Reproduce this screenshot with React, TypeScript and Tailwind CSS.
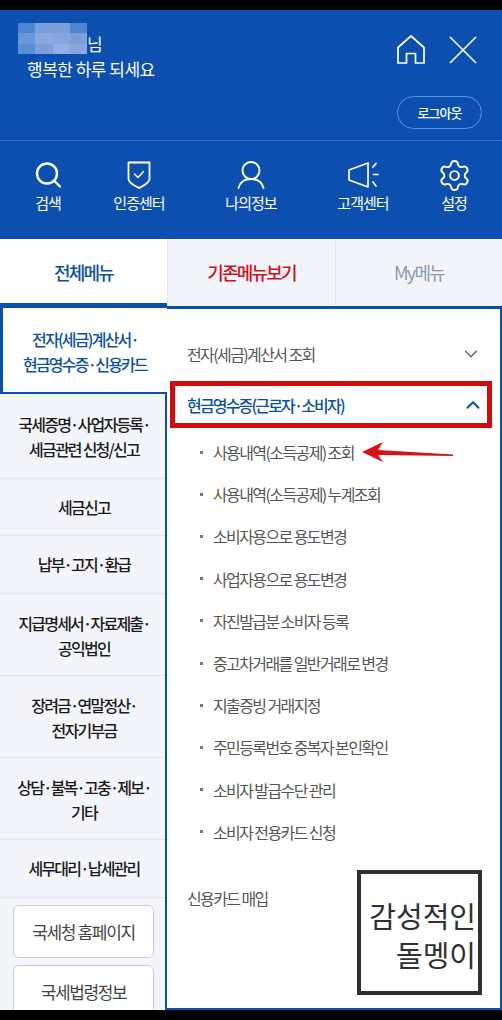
import { ChevronDown, ChevronUp, Settings } from "lucide-react";

const font = "font-['Noto_Sans_CJK_KR','Noto_Sans',sans-serif]";

function HomeIcon() {
  return (
    <svg width="28" height="29" viewBox="0 0 28 29" fill="none" stroke="currentColor" strokeWidth="1.7" strokeLinejoin="round">
      <path d="M1 12.5 L14 1 L27 12.5 V28 H18.5 V18.5 H9.5 V28 H1 Z" />
    </svg>
  );
}

function CloseIcon() {
  return (
    <svg width="28" height="28" viewBox="0 0 28 28" fill="none" stroke="currentColor" strokeWidth="1.6">
      <path d="M1 1 L27 27 M27 1 L1 27" />
    </svg>
  );
}

function SearchIcon() {
  return (
    <svg width="26" height="26" viewBox="0 0 26 26" fill="none" stroke="currentColor" strokeWidth="2.4" strokeLinecap="round">
      <circle cx="12" cy="11.5" r="10" />
      <path d="M19.5 19 L25 24.5" />
    </svg>
  );
}

function ShieldIcon() {
  return (
    <svg width="24" height="28" viewBox="0 0 24 28" fill="none" stroke="currentColor" strokeWidth="1.8" strokeLinejoin="round" strokeLinecap="round">
      <path d="M1.5 1.5 H22.5 V18 C22.5 22 16 25 12 27 C8 25 1.5 22 1.5 18 Z" />
      <path d="M7.5 13 L11 16.5 L16.5 10.5" strokeWidth="1.5" />
    </svg>
  );
}

function UserIcon() {
  return (
    <svg width="28" height="28" viewBox="0 0 28 28" fill="none" stroke="currentColor" strokeWidth="1.9" strokeLinecap="round">
      <circle cx="14" cy="9.5" r="8.5" />
      <path d="M1.5 27 C3 21 8 18 14 18 C20 18 25 21 26.5 27" />
    </svg>
  );
}

function MegaphoneIcon() {
  return (
    <svg width="31" height="26" viewBox="0 0 31 26" fill="none" stroke="currentColor" strokeWidth="1.7" strokeLinejoin="round" strokeLinecap="round">
      <path d="M1 8 L20 1 V25 L1 18 Z" />
      <path d="M25 5 L28 1.5 M25.5 12.5 H30 M25 20 L28 24" />
    </svg>
  );
}

function GearIcon() {
  return <Settings size={35} strokeWidth={1.3} />;
}

const shortcuts = [
  { label: "검색", icon: <SearchIcon />, w: "w-[96px]" },
  { label: "인증센터", icon: <ShieldIcon />, w: "w-[86px]" },
  { label: "나의정보", icon: <UserIcon />, w: "w-[138px]" },
  { label: "고객센터", icon: <MegaphoneIcon />, w: "w-[86px]" },
  { label: "설정", icon: <GearIcon />, w: "w-[96px]" },
];

const sideMenu = [
  { label: ["국세증명·사업자등록·", "세금관련 신청/신고"], h: "h-[85px]" },
  { label: ["세금신고"], h: "h-[57px]" },
  { label: ["납부·고지·환급"], h: "h-[58px]" },
  { label: ["지급명세서·자료제출·", "공익법인"], h: "h-[82px]" },
  { label: ["장려금·연말정산·", "전자기부금"], h: "h-[82px]" },
  { label: ["상담·불복·고충·제보·", "기타"], h: "h-[82px]" },
  { label: ["세무대리·납세관리"], h: "h-[58px]" },
];

const subMenu = [
  "사용내역(소득공제) 조회",
  "사용내역(소득공제) 누계조회",
  "소비자용으로 용도변경",
  "사업자용으로 용도변경",
  "자진발급분 소비자 등록",
  "중고차거래를 일반거래로 변경",
  "지출증빙 거래지정",
  "주민등록번호 중복자 본인확인",
  "소비자 발급수단 관리",
  "소비자 전용카드 신청",
];

const mosaic = [
  "bg-[#4f86d2]", "bg-[#7c9fdc]", "bg-[#7c9fdc]", "bg-[#4f86d2]",
  "bg-[#6a97d8]", "bg-[#8aa8e0]", "bg-[#85a5de]", "bg-[#7c9fdc]",
  "bg-[#5a8dd4]", "bg-[#7f9fdc]", "bg-[#93aee2]", "bg-[#86a6de]",
];

export default function App() {
  return (
    <div className={`${font} flex h-[1020px] w-[502px] flex-col overflow-hidden bg-black py-[10px] tracking-[-0.06em]`}>
      <header className="h-[229px] shrink-0 bg-[#0d4fae] text-white">
        <div className="flex h-[131px] justify-between border-b border-[#2f6cc4] pl-[18px] pr-[20px]">
          <div className="pt-[13px]">
            <div className="flex h-[31px] items-end">
              <div className="grid h-[31px] w-[69px] grid-cols-4 grid-rows-3">
                {mosaic.map((c, i) => (
                  <div key={i} className={c} />
                ))}
              </div>
              <span className="text-[17px] leading-[20px]">님</span>
            </div>
            <p className="ml-[9px] mt-[3px] text-[17px] leading-[24px] tracking-[-0.03em]">행복한 하루 되세요</p>
          </div>
          <div className="flex flex-col items-end">
            <div className="mt-[25px] flex items-center gap-[24px] pr-[5px]">
              <HomeIcon />
              <CloseIcon />
            </div>
            <button className="mt-[32px] h-[33px] w-[85px] rounded-full border border-[#5c93e0] text-[13px] font-medium">로그아웃</button>
          </div>
        </div>
        <div className="flex pt-[19px]">
          {shortcuts.map(({ label, icon, w }) => (
            <div key={label} className={`${w} flex flex-col items-center`}>
              <div className="flex h-[30px] items-center justify-center">{icon}</div>
              <span className="mt-[2px] text-[15px] leading-[22px]">{label}</span>
            </div>
          ))}
        </div>
      </header>

      <div className="flex h-[67px] shrink-0 bg-[#f2f4f9] text-[18px] font-medium tracking-[-0.1em]">
        <div className="flex w-[167px] items-center justify-center border-b-[3px] border-[#0d4fa5] bg-white pt-[2px] text-[#0d4fa5]">전체메뉴</div>
        <div className="flex w-[168px] items-center justify-center border-l border-[#e3e6ee] pb-[1px] text-[#d0101b]">기존메뉴보기</div>
        <div className="flex w-[167px] items-center justify-center border-l border-[#e3e6ee] pb-[1px] font-normal text-[#8d99ab]">My메뉴</div>
      </div>

      <div className="flex min-h-0 flex-1 overflow-hidden bg-white">
        <nav className="w-[165px] shrink-0 bg-[#f3f5fa] text-center text-[16px] font-medium leading-[25px] tracking-[-0.11em] text-[#1b1b1b]">
          <div className="relative z-10 flex h-[88px] w-[167px] flex-col justify-center border-y-2 border-l-[3px] border-[#0d4fa5] bg-white pt-[3px] text-[#0d4fa5]">
            <span>전자(세금)계산서·</span>
            <span>현금영수증·신용카드</span>
          </div>
          {sideMenu.map((item) => (
            <div key={item.label[0]} className={`${item.h} flex flex-col justify-center border-b border-[#e2e5ec] pl-[3px] ${item.label.length > 1 ? "pt-[2px]" : ""}`}>
              {item.label.map((line) => (
                <span key={line}>{line}</span>
              ))}
            </div>
          ))}
          <div className="flex flex-col gap-[7px] pl-[13px] pr-[11px] pt-[7px] text-[17px] font-normal tracking-[-0.08em] text-[#444]">
            <div className="flex h-[53px] shrink-0 items-center justify-center rounded-[6px] border border-[#c8ccd3] bg-white">국세청 홈페이지</div>
            <div className="flex h-[53px] shrink-0 items-center justify-center rounded-[6px] border border-[#c8ccd3] bg-white">국세법령정보</div>
          </div>
        </nav>

        <main className="relative min-w-0 flex-1 border-x-2 border-b-2 border-t-[3px] border-[#0d4fa5] pl-[20px] text-[16px] tracking-[-0.1em] text-[#555]">
          <div className="flex h-[72px] items-center justify-between pr-[18px] pt-[17px]">
            <span>전자(세금)계산서 조회</span>
            <ChevronDown size={22} strokeWidth={1.6} className="text-[#666]" />
          </div>
          <div className="-ml-[17px] mr-[8px] flex h-[47px] items-center justify-between border-[5px] border-[#d00d0d] pl-[12px] pr-[3px] font-medium tracking-[-0.115em] text-[#0d4fa5]">
            <span>현금영수증(근로자·소비자)</span>
            <ChevronUp size={22} strokeWidth={2.2} />
          </div>
          <ul className="pt-[3px]">
            {subMenu.map((item) => (
              <li key={item} className="flex h-[42.2px] items-center pl-[13px]">
                <span className="mr-[10px] h-[3px] w-[3px] bg-[#777]" />
                {item}
              </li>
            ))}
          </ul>
          <div className="pt-[33px]">신용카드 매입</div>

          <svg width="92" height="24" viewBox="0 0 92 24" className="absolute left-[195px] top-[131px]">
            <path d="M0 12 L21 2 L16 10 L91 14.5 V16 L16 15 L21 22 Z" fill="#d81118" />
          </svg>

          <div className="absolute left-[190px] top-[561px] flex h-[125px] w-[125px] flex-col whitespace-nowrap border-[4px] border-[#2f3033] bg-white pr-[2px] pt-[22px] text-right text-[29px] leading-[39px] tracking-normal text-[#2f3033]">
            <span>감성적인</span>
            <span>돌멩이</span>
          </div>
        </main>
      </div>
    </div>
  );
}
